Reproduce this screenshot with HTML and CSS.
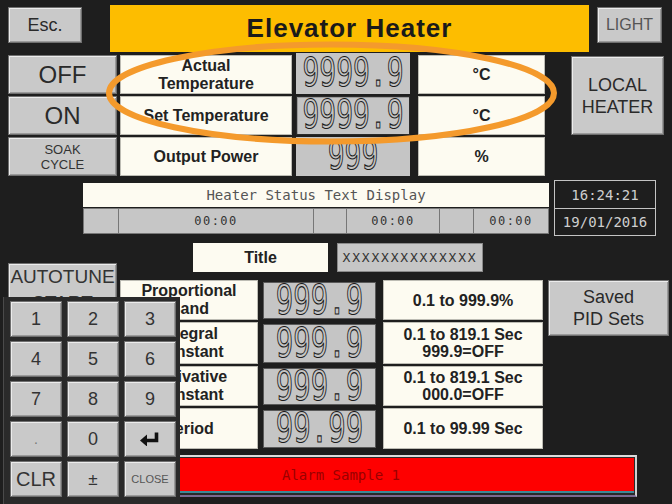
FILE: index.html
```html
<!DOCTYPE html>
<html>
<head>
<meta charset="utf-8">
<link rel="stylesheet" href="styles.css">
</head>
<body>
<div class="screen">
  <header class="top">
    <div class="btn esc">Esc.</div>
    <div class="title">Elevator Heater</div>
    <div class="btn light">LIGHT</div>
  </header>

  <section class="main">
    <div class="col col-left">
      <div class="btn big">OFF</div>
      <div class="btn big">ON</div>
      <div class="btn soak">SOAK<br>CYCLE</div>
    </div>
    <div class="col col-labels">
      <div class="cell">Actual<br>Temperature</div>
      <div class="cell">Set Temperature</div>
      <div class="cell">Output Power</div>
    </div>
    <div class="col col-digits">
      <div class="lcd lcd-first"><span class="lcd-text">9999.9</span></div>
      <div class="lcd lcd-framed"><span class="lcd-text">9999.9</span></div>
      <div class="lcd"><span class="lcd-text">999</span></div>
    </div>
    <div class="col col-units">
      <div class="cell">°C</div>
      <div class="cell">°C</div>
      <div class="cell">%</div>
    </div>
    <div class="btn local">LOCAL<br>HEATER</div>
  </section>

  <section class="status">
    <div class="status-main">
      <div class="status-text">Heater Status Text Display</div>
      <div class="timers">
        <div class="seg seg-a"></div>
        <div class="seg seg-b">00:00</div>
        <div class="seg seg-c"></div>
        <div class="seg seg-d">00:00</div>
        <div class="seg seg-e"></div>
        <div class="seg seg-f">00:00</div>
      </div>
    </div>
    <div class="clock">
      <div class="clock-row">16:24:21</div>
      <div class="clock-row">19/01/2016</div>
    </div>
  </section>

  <section class="lower">
    <div class="lower-left">
      <div class="btn autotune">AUTOTUNE<br>START</div>
    </div>
    <div class="lower-right">
      <div class="title-row">
        <div class="title-box">Title</div>
        <div class="xbox">XXXXXXXXXXXXXX</div>
      </div>
      <div class="pid">
        <div class="btn saved">Saved<br>PID Sets</div>

        <div class="cell pcell">Proportional<br>Band</div>
        <div class="lcd plcd"><span class="lcd-text">999.9</span></div>
        <div class="cell rcell">0.1 to 999.9%</div>

        <div class="cell pcell">Integral<br>Constant</div>
        <div class="lcd plcd"><span class="lcd-text">999.9</span></div>
        <div class="cell rcell">0.1 to 819.1 Sec<br>999.9=OFF</div>

        <div class="cell pcell">Derivative<br>Constant</div>
        <div class="lcd plcd"><span class="lcd-text">999.9</span></div>
        <div class="cell rcell">0.1 to 819.1 Sec<br>000.0=OFF</div>

        <div class="cell pcell">Period</div>
        <div class="lcd plcd"><span class="lcd-text">99.99</span></div>
        <div class="cell rcell">0.1 to 99.99 Sec</div>
      </div>
    </div>
  </section>

  <section class="alarm">
    <div class="alarm-red">Alarm Sample 1</div>
  </section>

  <div class="keypad">
    <div class="btn key">1</div>
    <div class="btn key">2</div>
    <div class="btn key">3</div>
    <div class="btn key">4</div>
    <div class="btn key">5</div>
    <div class="btn key">6</div>
    <div class="btn key">7</div>
    <div class="btn key">8</div>
    <div class="btn key">9</div>
    <div class="btn key key-dot">.</div>
    <div class="btn key">0</div>
    <div class="btn key"><svg class="enter" width="20" height="14" viewBox="0 0 20 14"><path d="M16.5 0.5 V8.5 H6" fill="none" stroke="#111" stroke-width="3.6"/><path d="M0 8.5 L7 2.5 L7 14.5 Z" fill="#111"/></svg></div>
    <div class="btn key key-clr">CLR</div>
    <div class="btn key key-pm">±</div>
    <div class="btn key key-close">CLOSE</div>
  </div>

  <svg class="ring" width="672" height="504" viewBox="0 0 672 504">
    <ellipse cx="331.5" cy="93" rx="222.5" ry="48.5" fill="none" stroke="#f49a2c" stroke-width="6"/>
  </svg>
</div>
</body>
</html>
```

FILE: styles.css
```css
* { box-sizing: border-box; margin: 0; padding: 0; }
html, body { width: 672px; height: 504px; overflow: hidden; }
body {
  background: #1e1e1e;
  font-family: "Liberation Sans", Arial, sans-serif;
  color: #222;
}
.screen { position: relative; width: 672px; height: 504px; }

.btn {
  background: #c9c9c9;
  border: 1px solid #6f6f6f;
  box-shadow: inset 1px 1px 0 #ececec, inset -1px -1px 0 #9a9a9a;
  display: flex;
  align-items: center;
  justify-content: center;
  text-align: center;
  color: #2a2a2a;
  line-height: 1;
}

/* header */
.top { display: flex; align-items: flex-start; height: 55px; padding-top: 5px; }
.esc { margin-left: 8px; margin-top: 2px; width: 74px; height: 36px; font-size: 18px; }
.title {
  margin-left: 28px; width: 479px; height: 47px;
  background: #fdbd00;
  display: flex; align-items: center; justify-content: center;
  font-weight: bold; font-size: 26px; letter-spacing: 1px; color: #1a1a1a;
}
.light { margin-left: 8px; margin-top: 2px; width: 65px; height: 36px; font-size: 16px; color: #555; }

/* main block */
.main { display: flex; height: 125px; }
.col { display: grid; grid-template-rows: repeat(3, 39px); row-gap: 2px; }
.col-left { margin-left: 8px; width: 109px; }
.col-labels { margin-left: 3px; width: 172px; }
.col-digits { margin-left: 4px; width: 114px; }
.col-units { margin-left: 8px; width: 127px; }
.big { font-size: 24px; }
.soak { font-size: 13px; line-height: 15px; color: #333; }
.local { margin-left: 26px; margin-top: 1px; width: 93px; height: 79px; font-size: 18px; line-height: 22px; }

.cell {
  background: #fdfbf1;
  border: 1px solid #bdbcb4;
  display: flex; align-items: center; justify-content: center;
  text-align: center;
  font-weight: bold; font-size: 16px; line-height: 18px; color: #222;
}

.lcd {
  background: #c5c5c5;
  display: flex; align-items: center; justify-content: center;
}
.lcd-first { margin-top: -2px; }
.lcd-framed { border: 1px solid #2a2a2a; box-shadow: inset 1px 1px 0 #9a9a9a; }
.lcd-text {
  display: inline-block;
  font-family: "DejaVu Sans Mono", monospace;
  font-size: 28px;
  line-height: 0.8;
  color: #c5c5c5;
  -webkit-text-stroke: 0.8px #1a1a1a;
  transform: scaleY(1.42);
}

/* status */
.status { display: flex; height: 58px; }
.status-main { margin-left: 83px; width: 466px; padding-top: 3px; }
.status-text {
  height: 24px; background: #fdfbf1;
  display: flex; align-items: center; justify-content: center;
  font-family: "DejaVu Sans Mono", monospace; font-size: 14px; color: #555;
}
.timers { display: flex; height: 26px; margin-top: 1px; background: #c6c6c6; border: 1px solid #777; }
.seg {
  border-right: 1px solid #777;
  display: flex; align-items: center; justify-content: center;
  font-family: "DejaVu Sans Mono", monospace; font-size: 12px; letter-spacing: 1.5px; color: #333;
}
.seg:last-child { border-right: none; }
.seg-a { width: 35px; }
.seg-b { width: 195px; }
.seg-c { width: 33px; }
.seg-d { width: 93px; }
.seg-e { width: 34px; }
.seg-f { flex: 1; }
.clock {
  margin-left: 5px; width: 102px; height: 56px;
  border: 1px solid #c4c4c4;
  display: grid; grid-template-rows: 1fr 1fr;
}
.clock-row {
  display: flex; align-items: center; justify-content: center;
  font-family: "DejaVu Sans Mono", monospace; font-size: 14px; color: #cfcfcf;
}
.clock-row + .clock-row { border-top: 1px solid #c4c4c4; }

/* lower */
.lower { display: flex; margin-top: 5px; }
.lower-left { margin-left: 8px; width: 109px; padding-top: 20px; }
.autotune {
  height: 58px; font-size: 19px; line-height: 26px;
  align-items: flex-start; overflow: hidden; color: #333;
}
.lower-right { margin-left: 3px; flex: 1; }
.title-row { display: flex; height: 29px; padding-left: 73px; }
.title-box {
  width: 135px; background: #fdfbf1;
  display: flex; align-items: center; justify-content: center;
  font-weight: bold; font-size: 16px;
}
.xbox {
  margin-left: 9px; width: 146px;
  background: #c6c6c6; border: 1px solid #8a8a8a;
  display: flex; align-items: center; justify-content: center;
  font-family: "DejaVu Sans Mono", monospace; font-size: 13px; letter-spacing: 1.8px; color: #333;
}
.pid {
  margin-top: 8px;
  display: grid;
  grid-template-columns: 138px 115px 160px 121px;
  grid-template-rows: 40px 42px 40px 41px;
  column-gap: 5px; row-gap: 2px;
}
.pcell { grid-column: 1; }
.plcd { grid-column: 2; margin: 2px 2px 1px 0; border: 1px solid #5a5a5a; }
.plcd .lcd-text { font-size: 29px; transform: scaleY(1.38); }
.rcell { grid-column: 3; font-size: 16px; line-height: 17px; }
.saved { grid-column: 4; grid-row: 1 / 3; align-self: start; height: 56px; font-size: 18px; line-height: 22px; }

/* alarm */
.alarm {
  margin-left: 45px; margin-top: 6px; width: 592px; height: 42px;
  border-top: 2px solid #dcdcdc; border-left: 2px solid #cfcfcf; border-right: 2px solid #cfcfcf;
  border-bottom: 2px solid #7a6a90;
  padding: 1px 1px 0 1px;
  background: #2a2a2a;
}
.alarm-red {
  height: 35px; background: #fe0000;
  border-bottom: 2px solid #3f8a98;
  display: flex; align-items: center; justify-content: center;
  font-family: "DejaVu Sans Mono", monospace; font-size: 14px; color: #9a0000;
}

/* keypad overlay */
.keypad {
  position: absolute; left: 3px; top: 297px; width: 177px; height: 207px;
  background: #2a2a2a;
  border-left: 1px solid #4a4a4a;
  padding: 4px 0 0 6px;
  display: grid;
  grid-template-columns: repeat(3, 52px);
  grid-template-rows: repeat(5, 36px);
  gap: 4px 5px;
  z-index: 2;
}
.key { font-size: 18px; color: #333; }
.key-dot { font-size: 14px; color: #777; }
.key-clr { font-size: 20px; }
.key-pm { font-size: 17px; }
.key-close { font-size: 11px; color: #555; }
.enter { display: block; }

.ring { position: absolute; left: 0; top: 0; pointer-events: none; z-index: 3; }
```
